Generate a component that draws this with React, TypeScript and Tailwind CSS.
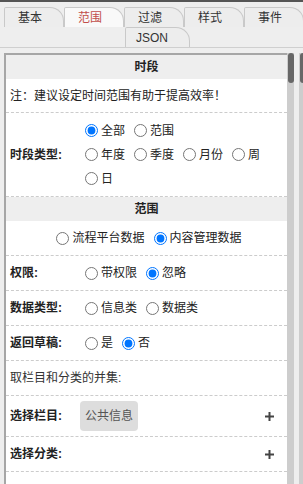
const tabs = [
  { label: "基本", active: false },
  { label: "范围", active: true },
  { label: "过滤", active: false },
  { label: "样式", active: false },
  { label: "事件", active: false },
];

function Radio({ name, label, checked }: { name: string; label: string; checked?: boolean }) {
  return (
    <label className="flex items-center pl-[5px] leading-[18px]">
      <input type="radio" name={name} defaultChecked={checked} className="w-[13px] h-[13px] mr-[3px] shrink-0" />
      <span>{label}</span>
    </label>
  );
}

function Row({ label, height = "h-[35px]", children }: { label?: string; height?: string; children?: React.ReactNode }) {
  return (
    <div className={`flex items-center px-[4px] border-b border-dashed border-[#cccccc] ${height}`}>
      {label && <div className="w-[70px] shrink-0 font-bold">{label}</div>}
      {children}
    </div>
  );
}

function Plus() {
  return (
    <svg width="9" height="9" viewBox="0 0 9 9" className="ml-auto mr-[9px] shrink-0">
      <path d="M4.5 0V9M0 4.5H9" stroke="#444" strokeWidth="2" />
    </svg>
  );
}

function Scrollbar() {
  return (
    <div className="w-[7px] shrink-0 bg-[#cdcdcd] flex justify-center">
      <div className="w-[6px] h-[30px] rounded-[3px] bg-[#676767]" />
    </div>
  );
}

export default function App() {
  return (
    <div
      className="w-[303px] h-[484px] overflow-hidden bg-[#eeeeee] text-[12px] text-[#222]"
      style={{ fontFamily: '"Liberation Sans", "Noto Sans CJK SC", sans-serif' }}
    >
      <div className="h-[2px] bg-[#555]" />

      {/* Tabs */}
      <div className="pt-[5px] border-b border-[#cfcfcf]">
        <div className="flex pl-[4px]">
          {tabs.map((t) => (
            <div
              key={t.label}
              className={`h-[20px] w-[60px] shrink-0 pl-[13px] leading-[20px] border border-b-0 border-[#c9c9c9] rounded-tl-[2px] rounded-tr-[14px] ${
                t.active ? "bg-[#f9f9f9] text-[#c24f4a]" : "bg-[#ededed] text-[#333]"
              }`}
            >
              {t.label}
            </div>
          ))}
        </div>
        <div className="flex pl-[125px]">
          <div className="h-[20px] w-[65px] pl-[10px] leading-[20px] border border-b-0 border-[#c9c9c9] rounded-tl-[2px] rounded-tr-[14px] bg-[#ededed] text-[#333]">
            JSON
          </div>
        </div>
      </div>

      <div className="flex mt-[5px]">
        {/* Panel */}
        <div className="ml-[4px] w-[283px] shrink-0 bg-white border-t-2 border-l-2 border-[#a6a6a6]">
          <div className="h-[24px] bg-[#eeeeee] flex items-center justify-center font-bold">时段</div>
          <Row height="h-[34px]">
            <span>注：建议设定时间范围有助于提高效率！</span>
          </Row>
          <Row label="时段类型:" height="h-[84px]">
            <div className="flex flex-col gap-[6px]">
              <div className="flex gap-[4px]">
                <Radio name="all" label="全部" checked />
                <Radio name="all" label="范围" />
              </div>
              <div className="flex flex-wrap gap-x-[4px] gap-y-[6px] w-[205px]">
                <Radio name="t" label="年度" />
                <Radio name="t" label="季度" />
                <Radio name="t" label="月份" />
                <Radio name="t" label="周" />
                <Radio name="t" label="日" />
              </div>
            </div>
          </Row>

          <div className="h-[24px] bg-[#eeeeee] flex items-center justify-center font-bold">范围</div>
          <div className="h-[35px] flex items-center justify-center gap-[4px] border-b border-dashed border-[#cccccc]">
            <Radio name="src" label="流程平台数据" />
            <Radio name="src" label="内容管理数据" checked />
          </div>
          <Row label="权限:">
            <div className="flex gap-[4px]">
              <Radio name="perm" label="带权限" />
              <Radio name="perm" label="忽略" checked />
            </div>
          </Row>
          <Row label="数据类型:">
            <div className="flex gap-[4px]">
              <Radio name="dt" label="信息类" />
              <Radio name="dt" label="数据类" />
            </div>
          </Row>
          <Row label="返回草稿:">
            <div className="flex gap-[4px]">
              <Radio name="draft" label="是" />
              <Radio name="draft" label="否" checked />
            </div>
          </Row>
          <Row>
            <span className="text-[#333]">取栏目和分类的并集:</span>
          </Row>
          <Row label="选择栏目:" height="h-[41px]">
            <div className="h-[30px] px-[5px] flex items-center rounded-[4px] bg-[#dddddd] text-[#555]">公共信息</div>
            <Plus />
          </Row>
          <Row label="选择分类:">
            <Plus />
          </Row>
          <div className="h-[40px]" />
        </div>
        <Scrollbar />
        <div className="w-[5px] shrink-0" />
        <Scrollbar />
      </div>
    </div>
  );
}
